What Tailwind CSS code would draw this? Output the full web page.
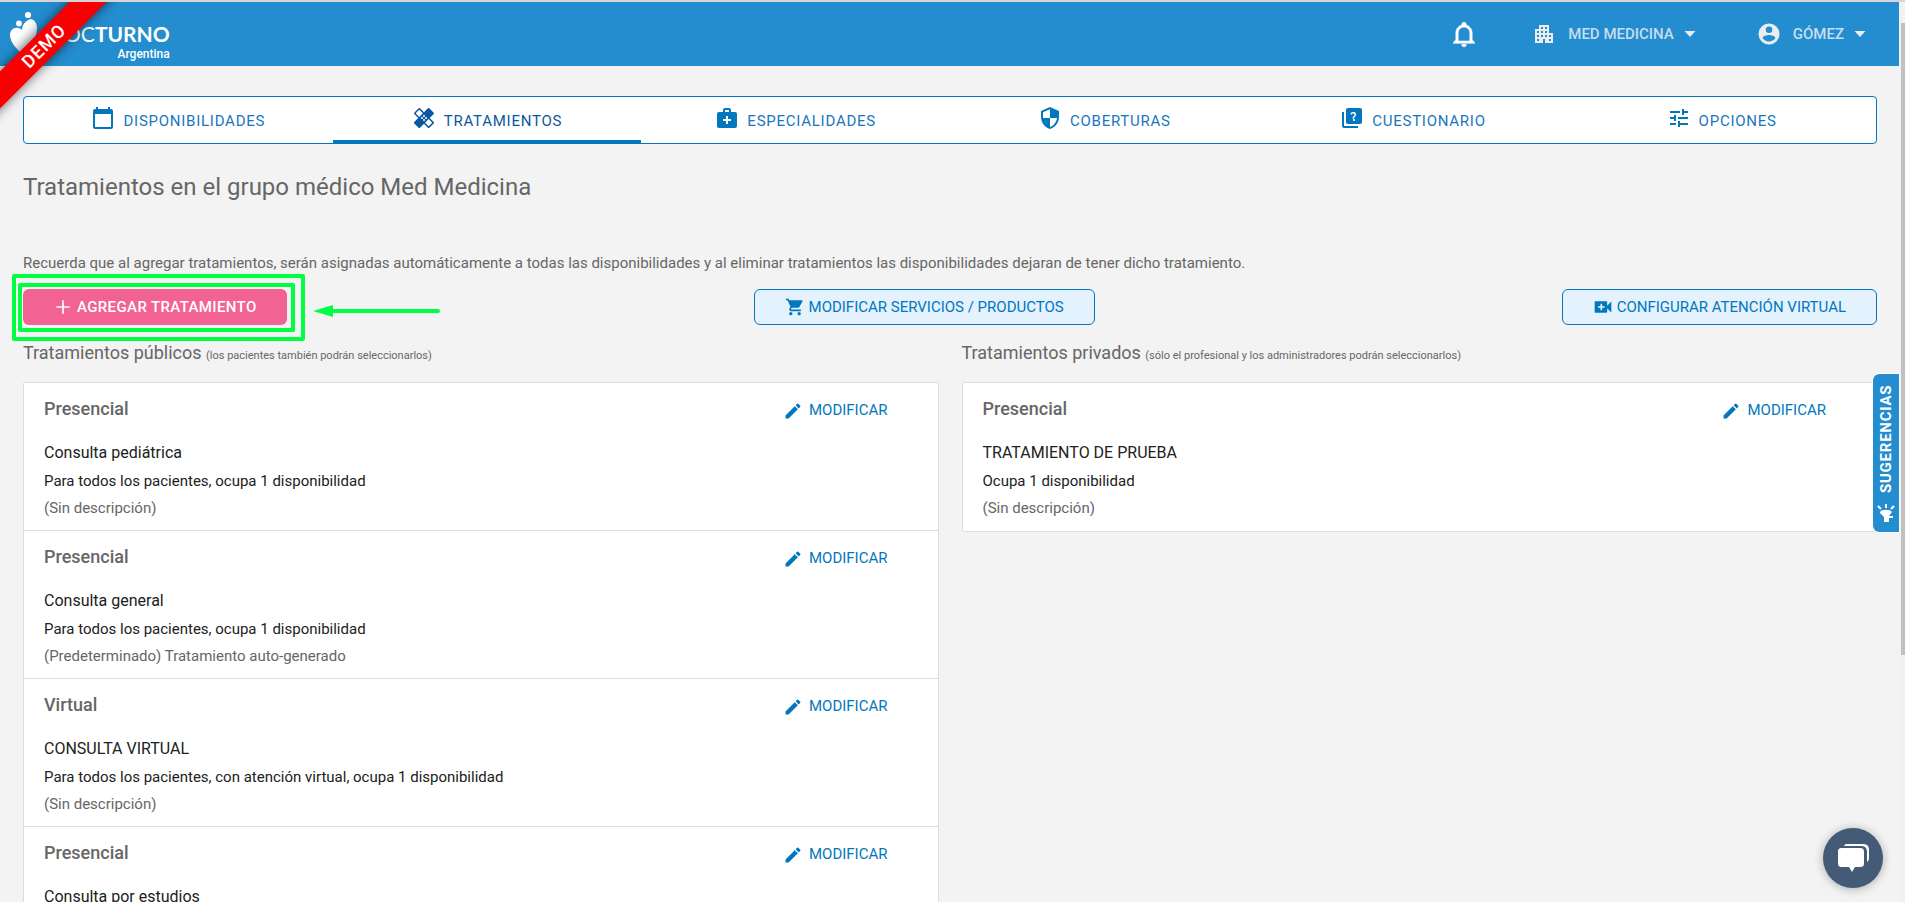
<!DOCTYPE html>
<html lang="es">
<head>
<meta charset="utf-8">
<title>Tratamientos - Med Medicina</title>
<script src="https://cdn.jsdelivr.net/npm/@tailwindcss/browser@4"></script>
</head>
<body class="flex h-screen flex-col overflow-hidden border-t-2 border-[#d5d5d5] bg-[#f3f3f3] font-['Roboto',sans-serif] text-[#666]">
<svg class="hidden">
  <symbol id="pencil" viewBox="0 0 24 24"><path d="M3 17.250V21h3.750L17.810 9.940l-3.750-3.750L3 17.250zM20.710 7.040a1 1 0 0 0 0-1.410l-2.340-2.340a1 1 0 0 0-1.410 0l-1.830 1.830 3.750 3.750 1.830-1.830z"/></symbol>
</svg>
<div class="flex min-h-0 flex-1">
<div class="relative min-w-0 flex-1">
  <header class="flex h-16 items-center justify-between bg-[#248dcf] text-white">
    <a href="#" class="flex h-full items-start" aria-label="Nocturno Argentina">
      <svg class="ml-2 h-14 w-10" viewBox="0 0 40 56" fill="white"><defs><linearGradient id="hg" x1="0" x2="1" y1="0" y2="1"><stop offset=".4" stop-color="#fff"/><stop offset="1" stop-color="#c3ced6"/></linearGradient></defs><circle cx="20" cy="13" r="3.100"/><circle cx="11" cy="21.500" r="2.900"/><path fill="url(#hg)" d="M14 52C8 46 2 40 2 33c0-5 4-8 8-7 2 0 3 1 4 2 0-5 4-10 9-11 4 1 6 5 6 9 0 10-6 18-15 26z"/></svg>
      <span class="flex flex-col items-end pt-5">
        <span class="font-['Lato',sans-serif] text-[21px] leading-6"><span>NOC</span><span class="font-bold">TURNO</span></span>
        <span class="text-xs leading-4 font-medium">Argentina</span>
      </span>
    </a>
    <nav class="flex items-center pr-[27px]">
      <button class="mr-[54px]" aria-label="Notificaciones"><svg class="size-7" viewBox="0 0 24 24" fill="white" stroke="white" stroke-width=".5"><path d="M10 21h4a2 2 0 0 1-4 0zM21 19v1H3v-1l2-2v-6c0-3.100 2.030-5.830 5-6.710V4a2 2 0 0 1 4 0v.29c2.970.88 5 3.610 5 6.710v6l2 2zm-4-8a5 5 0 0 0-10 0v7h10v-7z"/></svg></button>
      <button class="mr-[55px] flex items-center text-[#e9edf0]"><svg class="mr-3 size-6" viewBox="0 0 24 24" fill="currentColor"><path fill-rule="evenodd" d="M17 11V3H7v4H3v14h8v-4h2v4h8V11h-4zM7 19H5v-2h2v2zm0-4H5v-2h2v2zm0-4H5V9h2v2zm4 4H9v-2h2v2zm0-4H9V9h2v2zm0-4H9V5h2v2zm4 8h-2v-2h2v2zm0-4h-2V9h2v2zm0-4h-2V5h2v2zm4 12h-2v-2h2v2zm0-4h-2v-2h2v2z"/></svg><span class="text-[15px] font-medium text-[#c5def1]">MED MEDICINA</span><svg class="ml-1 size-6" viewBox="0 0 24 24" fill="currentColor"><path d="M6.500 9h11L12 15z"/></svg></button>
      <button class="flex items-center text-[#e9edf0]"><svg class="mr-3 size-6" viewBox="0 0 24 24" fill="currentColor"><path fill-rule="evenodd" d="M12 1.500a10.500 10.500 0 1 0 0 21 10.500 10.500 0 0 0 0-21zm0 3a3.300 3.300 0 1 1 0 6.600 3.300 3.300 0 0 1 0-6.600zm0 15c-2.700 0-5-1.300-6.400-3.400 0-2 4.200-3.200 6.400-3.200s6.400 1.200 6.400 3.200A7.600 7.600 0 0 1 12 19.500z"/></svg><span class="text-[15px] font-medium text-[#c5def1]">GÓMEZ</span><svg class="ml-1 size-6" viewBox="0 0 24 24" fill="currentColor"><path d="M6.500 9h11L12 15z"/></svg></button>
    </nav>
  </header>
  <div class="absolute top-0 left-0 size-40 overflow-hidden">
    <div class="absolute top-[31px] -left-14 flex h-[26px] w-[200px] -rotate-45 items-center justify-center bg-[#f90000] text-lg font-medium tracking-wider text-white shadow-[0_0_12px_rgba(0,0,0,.6)]">DEMO</div>
  </div>

  <main class="pt-[30px] pr-[22px] pl-[23px]">
    <nav class="grid h-12 grid-cols-6 rounded border border-[#0277bd] bg-white text-[15px] tracking-wider text-[#1976c0]">
      <a href="#" class="flex items-center justify-center gap-2 pt-0.5"><svg class="mb-1.5 size-6" viewBox="0 0 24 24" fill="#0277bd"><path d="M20 3h-1V1h-2v2H7V1H5v2H4a2 2 0 0 0-2 2v16c0 1.100.9 2 2 2h16a2 2 0 0 0 2-2V5a2 2 0 0 0-2-2zm0 18H4V8h16v13z"/></svg>DISPONIBILIDADES</a>
      <a href="#" class="flex items-center justify-center gap-2 border-b-3 border-[#0277bd] pt-[5px] text-[#0d57a0]" aria-current="page"><svg class="mb-1.5 size-6" viewBox="0 0 24 24" fill="#0b57a4"><path d="M17.730 12.020l3.980-3.980a1 1 0 0 0 0-1.410l-4.340-4.340a1 1 0 0 0-1.410 0l-3.980 3.980L8 2.290a1 1 0 0 0-1.410 0L2.250 6.630a1 1 0 0 0 0 1.410l3.980 3.980L2.250 16a1 1 0 0 0 0 1.410l4.340 4.340c.39.390 1.020.390 1.410 0l3.980-3.980 3.980 3.980a1 1 0 0 0 1.410 0l4.340-4.340a1 1 0 0 0 0-1.410l-3.980-3.980zM12 9a1 1 0 1 1 0 2 1 1 0 0 1 0-2zm-4.710 1.960L3.660 7.340l3.630-3.630 3.620 3.620-3.620 3.630zM10 13a1 1 0 1 1 0-2 1 1 0 0 1 0 2zm2 2a1 1 0 1 1 0-2 1 1 0 0 1 0 2zm2-4a1 1 0 1 1 0 2 1 1 0 0 1 0-2zm2.660 9.340l-3.630-3.620 3.630-3.630 3.620 3.620-3.620 3.630z"/><path d="M16.660 3.200l4 4-4.500 4.500-4-4zM7.300 12.200l4 4-4.500 4.500-4-4z"/></svg>TRATAMIENTOS</a>
      <a href="#" class="flex items-center justify-center gap-2 pt-0.5"><svg class="mb-1.5 size-6" viewBox="0 0 24 24" fill="#0277bd"><path fill-rule="evenodd" d="M20 6h-4V4a2 2 0 0 0-2-2h-4a2 2 0 0 0-2 2v2H4a2 2 0 0 0-2 2v12c0 1.100.9 2 2 2h16a2 2 0 0 0 2-2V8a2 2 0 0 0-2-2zM10 4h4v2h-4V4zm6 11h-3v3h-2v-3H8v-2h3v-3h2v3h3v2z"/></svg>ESPECIALIDADES</a>
      <a href="#" class="flex items-center justify-center gap-2 pt-0.5"><svg class="mb-1.5 size-6" viewBox="0 0 24 24" fill="#0277bd"><path d="M12 1L3 5v6c0 5.550 3.840 10.740 9 12 5.160-1.260 9-6.450 9-12V5l-9-4zm0 10.990h7c-.53 4.120-3.280 7.790-7 8.940V12H5V6.300l7-3.110v8.800z"/></svg>COBERTURAS</a>
      <a href="#" class="flex items-center justify-center gap-2 pt-0.5"><svg class="mb-1.5 size-6" viewBox="0 0 24 24" fill="#0277bd"><path d="M4 6H2v14c0 1.100.9 2 2 2h14v-2H4V6z"/><path fill-rule="evenodd" d="M20 2H8a2 2 0 0 0-2 2v12c0 1.100.9 2 2 2h12a2 2 0 0 0 2-2V4a2 2 0 0 0-2-2zm-5.990 13a1.050 1.050 0 1 1 0-2.100 1.050 1.050 0 0 1 0 2.100zm1.770-5.180c-.63.930-1.230 1.210-1.560 1.810-.13.240-.18.400-.18 1.180h-1.520c0-.41-.06-1.080.26-1.650.41-.73 1.180-1.160 1.630-1.800.48-.68.210-1.940-1.140-1.940-.88 0-1.320.67-1.500 1.230l-1.370-.57C10.780 6.950 11.800 6 13.270 6c1.230 0 2.080.56 2.510 1.260.37.600.58 1.730 0 2.560z"/></svg>CUESTIONARIO</a>
      <a href="#" class="flex items-center justify-center gap-2 pt-0.5"><svg class="mb-1.5 size-6" viewBox="0 0 24 24" fill="#0277bd"><path d="M3 17v2h6v-2H3zM3 5v2h10V5H3zm10 16v-2h8v-2h-8v-2h-2v6h2zM7 9v2H3v2h4v2h2V9H7zm14 4v-2H11v2h10zm-6-4h2V7h4V5h-4V3h-2v6z"/></svg>OPCIONES</a>
    </nav>

    <h1 class="mt-[27px] text-2xl leading-8">Tratamientos en el grupo médico Med Medicina</h1>
    <p class="mt-12 text-[15px] leading-6">Recuerda que al agregar tratamientos, serán asignadas automáticamente a todas las disponibilidades y al eliminar tratamientos las disponibilidades dejaran de tener dicho tratamiento.</p>

    <div class="mt-[14px] flex justify-between text-[15px]">
      <div class="relative">
        <button class="flex h-9 items-center rounded-md bg-[#f26292] px-[30px] font-medium tracking-wide text-white"><svg class="mr-1 size-5" viewBox="0 0 24 24" fill="white"><path d="M20 13h-7v7h-2v-7H4v-2h7V4h2v7h7z"/></svg>AGREGAR TRATAMIENTO</button>
        <div class="pointer-events-none absolute -top-[6px] -right-[8px] -bottom-[7px] -left-[5px] rounded-[2px] border-4 border-[#00ff43]"></div>
        <div class="pointer-events-none absolute -top-[15px] -right-[18px] -bottom-[16px] -left-[11px] rounded-[2px] border-4 border-[#00ff43]"></div>
        <svg class="pointer-events-none absolute top-4 left-full ml-[26px] h-3 w-[127px]" viewBox="0 0 127 12"><path fill="#00ff43" d="M0 6L20 0v12z"/><path d="M18 6h107" stroke="#00ff43" stroke-width="4" stroke-linecap="round"/></svg>
      </div>
      <button class="flex h-9 items-center rounded-md border border-[#0277bd] bg-[#e3f2fd] px-[30px] text-[#0277bd]"><svg class="mr-1 size-5" viewBox="0 0 24 24" fill="currentColor"><path d="M7 18a2 2 0 1 0 0 4 2 2 0 0 0 0-4zM1 2v2h2l3.600 7.590-1.350 2.450A2 2 0 0 0 7 17h12v-2H7.420a.25.250 0 0 1-.25-.25l.9-1.750h7.480c.75 0 1.410-.41 1.750-1.030l3.580-6.490A1 1 0 0 0 20 4H5.210l-.94-2H1zm16 16a2 2 0 1 0 0 4 2 2 0 0 0 0-4z"/></svg>MODIFICAR SERVICIOS / PRODUCTOS</button>
      <button class="flex h-9 items-center rounded-md border border-[#0277bd] bg-[#e3f2fd] px-[30px] text-[#0277bd]"><svg class="mr-1 size-5" viewBox="0 0 24 24" fill="currentColor"><path fill-rule="evenodd" d="M17 10.500V6a1 1 0 0 0-1-1H3a1 1 0 0 0-1 1v12a1 1 0 0 0 1 1h13a1 1 0 0 0 1-1v-4.500l5 5v-13l-5 5zM14 13h-3v3H9v-3H6v-2h3V8h2v3h3v2z"/></svg>CONFIGURAR ATENCIÓN VIRTUAL</button>
    </div>

    <div class="mt-4 grid grid-cols-2 gap-x-[23px]">
      <section>
        <h2 class="text-lg leading-6">Tratamientos públicos <small class="text-[11px]">(los pacientes también podrán seleccionarlos)</small></h2>
        <ul class="mt-[14px] divide-y divide-[#ddd] rounded-[2px] border border-[#ddd] bg-white">
          <li class="flex h-[148px] justify-between pt-[14px] pr-[50px] pl-5">
            <div><h3 class="text-lg leading-6 font-medium">Presencial</h3><p class="mt-[18px] text-base leading-7 text-[#212121]">Consulta pediátrica</p><p class="text-[15px] leading-7 text-[#212121]">Para todos los pacientes, ocupa 1 disponibilidad</p><p class="text-[15px] leading-[26px]">(Sin descripción)</p></div>
            <a href="#" class="flex h-[27px] items-center gap-1.5 text-[15px] text-[#0277bd]"><svg class="size-5" fill="currentColor"><use href="#pencil"/></svg>MODIFICAR</a>
          </li>
          <li class="flex h-[148px] justify-between pt-[14px] pr-[50px] pl-5">
            <div><h3 class="text-lg leading-6 font-medium">Presencial</h3><p class="mt-[18px] text-base leading-7 text-[#212121]">Consulta general</p><p class="text-[15px] leading-7 text-[#212121]">Para todos los pacientes, ocupa 1 disponibilidad</p><p class="text-[15px] leading-[26px]">(Predeterminado) Tratamiento auto-generado</p></div>
            <a href="#" class="flex h-[27px] items-center gap-1.5 text-[15px] text-[#0277bd]"><svg class="size-5" fill="currentColor"><use href="#pencil"/></svg>MODIFICAR</a>
          </li>
          <li class="flex h-[148px] justify-between pt-[14px] pr-[50px] pl-5">
            <div><h3 class="text-lg leading-6 font-medium">Virtual</h3><p class="mt-[18px] text-base leading-7 text-[#212121]">CONSULTA VIRTUAL</p><p class="text-[15px] leading-7 text-[#212121]">Para todos los pacientes, con atención virtual, ocupa 1 disponibilidad</p><p class="text-[15px] leading-[26px]">(Sin descripción)</p></div>
            <a href="#" class="flex h-[27px] items-center gap-1.5 text-[15px] text-[#0277bd]"><svg class="size-5" fill="currentColor"><use href="#pencil"/></svg>MODIFICAR</a>
          </li>
          <li class="flex h-[148px] justify-between pt-[14px] pr-[50px] pl-5">
            <div><h3 class="text-lg leading-6 font-medium">Presencial</h3><p class="mt-[18px] text-base leading-7 text-[#212121]">Consulta por estudios</p></div>
            <a href="#" class="flex h-[27px] items-center gap-1.5 text-[15px] text-[#0277bd]"><svg class="size-5" fill="currentColor"><use href="#pencil"/></svg>MODIFICAR</a>
          </li>
        </ul>
      </section>
      <section>
        <h2 class="text-lg leading-6">Tratamientos privados <small class="text-[11px]">(sólo el profesional y los administradores podrán seleccionarlos)</small></h2>
        <ul class="mt-[14px] rounded-[2px] border border-[#ddd] bg-white">
          <li class="flex h-[148px] justify-between pt-[14px] pr-[50px] pl-5">
            <div><h3 class="text-lg leading-6 font-medium">Presencial</h3><p class="mt-[18px] text-base leading-7 text-[#212121]">TRATAMIENTO DE PRUEBA</p><p class="text-[15px] leading-7 text-[#212121]">Ocupa 1 disponibilidad</p><p class="text-[15px] leading-[26px]">(Sin descripción)</p></div>
            <a href="#" class="flex h-[27px] items-center gap-1.5 text-[15px] text-[#0277bd]"><svg class="size-5" fill="currentColor"><use href="#pencil"/></svg>MODIFICAR</a>
          </li>
        </ul>
      </section>
    </div>
  </main>

  <button class="absolute top-[372px] right-0 flex h-[158px] w-[26px] rotate-180 items-center gap-2.5 rounded-r-md bg-[#248dcf] pt-[9px] text-[15px] font-bold tracking-wider text-white outline outline-white [writing-mode:vertical-rl]"><svg class="size-5 shrink-0 rotate-180" viewBox="0 0 20 20" fill="white"><path d="M4 9c2-3 10-3 12 0l-3 4h4v2h-4v4H8v-5L4 10z"/><path d="M10 5V1M5 6L2 3M15 6l3-3" stroke="white" stroke-width="2"/></svg>SUGERENCIAS</button>
  <button class="absolute right-4 bottom-[14px] flex size-15 items-center justify-center rounded-full bg-[#435b77] shadow-[0_1px_10px_rgba(0,0,0,.3)]" aria-label="Chat"><svg class="size-8" viewBox="0 0 32 32" fill="white"><path d="M5 6h18c3 0 4 1 4 4v11c0 3-1 4-4 4h-5l-3 5-3-5H5c-3 0-4-1-4-4V10c0-3 1-4 4-4z"/><path d="M7 4c1-2 2-2 4-2h15c4 0 6 2 6 6v6c0 3 0 5-2 6V10c0-4-2-6-6-6z"/></svg></button>
</div>
<div class="w-1.5 bg-[#f1f1f1] pt-[21px] pl-0.5"><div class="h-[632px] bg-[#c1c1c1]"></div></div>
</div>
</body>
</html>
